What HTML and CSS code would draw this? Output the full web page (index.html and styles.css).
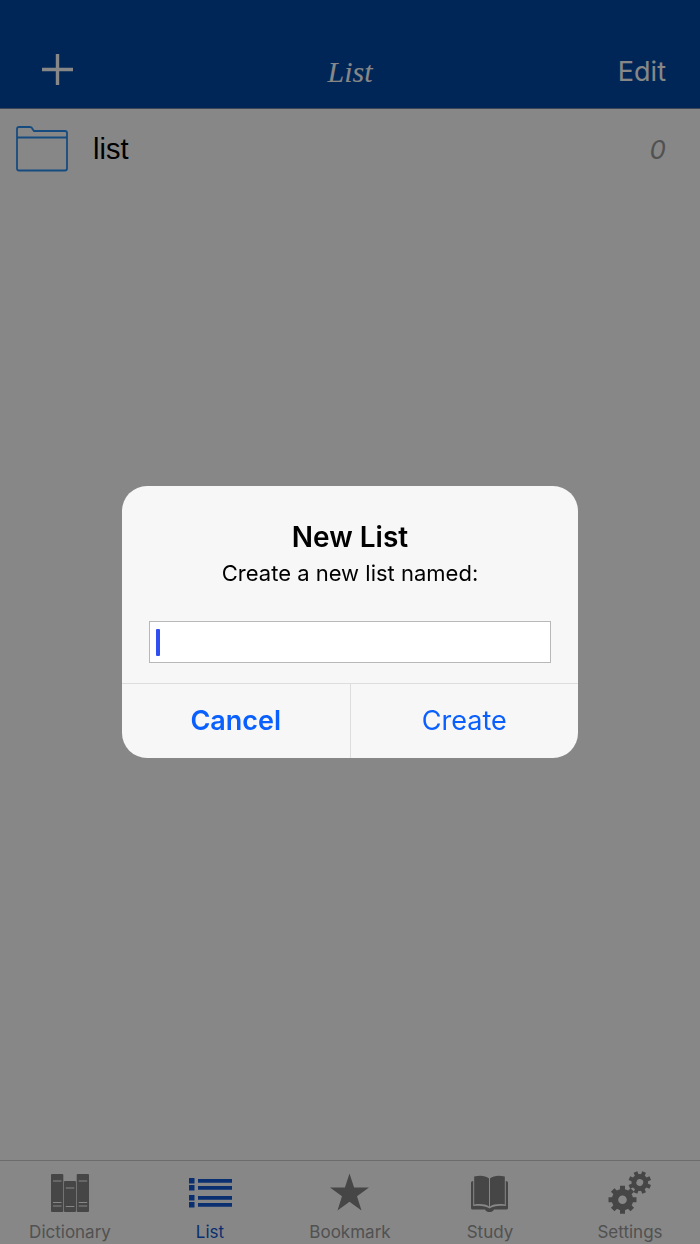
FILE: index.html
```html
<!DOCTYPE html>
<html lang="en">
<head>
    <meta charset="UTF-8">
    <meta name="viewport" content="width=device-width, initial-scale=1.0">
    <title>List</title>
    <link rel="stylesheet" href="styles.css">
</head>
<body>
    <header class="navbar">
        <button class="nav-btn add" type="button" aria-label="Add">
            <svg width="32" height="32" viewBox="0 0 32 32"><path d="M15.500 0v31M0 15.500h31" stroke="currentColor" stroke-width="3.400"/></svg>
        </button>
        <h1 class="nav-title">List</h1>
        <button class="nav-btn edit" type="button">Edit</button>
    </header>

    <main class="content">
        <a class="row" href="#list">
            <svg class="folder" width="52" height="46" viewBox="0 0 52 46" fill="none" stroke="currentColor" stroke-width="1.800">
                <path d="M1 11.500V3q0-2 2-2h11q2 0 2.500 2l1.500 2H49q2 0 2 2v35.500q0 2-2 2H3q-2 0-2-2zM1 11.500h50"/>
            </svg>
            <span class="row-name">list</span>
            <span class="row-count">0</span>
        </a>
    </main>

    <nav class="tabbar">
        <a class="tab" href="#dictionary">
            <svg width="44" height="44" viewBox="0 0 44 44" fill="currentColor">
                <rect x="3" y="3" width="12.300" height="38" rx="1"/>
                <rect x="16" y="10" width="12" height="31" rx="1"/>
                <rect x="28.700" y="3" width="12.300" height="38" rx="1"/>
                <path class="cut" d="M5 10h8.500M5 31.500h8.500M5 35h8.500M17.800 17h8.500M17.800 35.500h8.500M30.700 10h8.500M30.700 31.500h8.500M30.700 35h8.500"/>
            </svg>
            <span>Dictionary</span>
        </a>
        <a class="tab active" href="#list" aria-current="page">
            <svg width="44" height="44" viewBox="0 0 44 44" fill="currentColor">
                <path d="M1 7h5.500v5.500H1zM1 14h5.500v5.500H1zM1 24h5.500v5.500H1zM1 31h5.500v5.500H1zM10 8h34v3.800H10zM10 15h34v3.800H10zM10 25h34v3.800H10zM10 32h34v3.800H10z"/>
            </svg>
            <span>List</span>
        </a>
        <a class="tab" href="#bookmark">
            <svg width="44" height="44" viewBox="0 0 44 44" fill="currentColor">
                <path d="M21.500 2.500l4.600 14H41L29 25.200 33.500 39.500 21.500 30.700 9.500 39.500 14 25.200 2 16.500h14.900z"/>
            </svg>
            <span>Bookmark</span>
        </a>
        <a class="tab" href="#study">
            <svg width="44" height="44" viewBox="0 0 44 44" fill="currentColor">
                <path d="M6.200 5.500C12 4 17.500 4.500 21 7.500V35.500C17.500 33 12 32.500 6.200 33.500zM36.800 5.500C31 4 25.500 4.500 22 7.500V35.500c3.500-2.500 9-3 14.800-2z"/>
                <path d="M5.200 10v25.100c6.500-1 12-.500 16.300 2.400 4.300-2.900 9.800-3.400 16.300-2.400V10q2.200 0 2.200 1.500V37q0 1.500-1.600 1.500H26C25 40.500 23.500 41 21.500 41s-3.500-.500-4.500-2.500H4.600Q3 38.500 3 37V11.500Q3 10 5.200 10z"/>
            </svg>
            <span>Study</span>
        </a>
        <a class="tab" href="#settings">
            <svg width="44" height="44" viewBox="0 0 44 44" fill="none" stroke="currentColor">
                <g transform="translate(14.500 28.700)">
                    <circle r="7.500" stroke-width="6.400"/>
                    <path stroke-width="5" d="M0-9.500V-14M0 9.500V14M-9.500 0H-14M9.500 0H14M-6.700-6.700l-3.100-3.100M6.700-6.700l3.100-3.100M-6.700 6.700l-3.100 3.100M6.700 6.700l3.100 3.100"/>
                </g>
                <g transform="translate(31.800 11.500) rotate(22.500)">
                    <circle r="5.900" stroke-width="5"/>
                    <path stroke-width="4" d="M0-7.500V-11.300M0 7.500V11.300M-7.500 0H-11.300M7.500 0H11.300M-5.300-5.300l-2.700-2.700M5.300-5.300l2.700-2.700M-5.300 5.300l-2.700 2.700M5.300 5.300l2.700 2.700"/>
                </g>
            </svg>
            <span>Settings</span>
        </a>
    </nav>

    <div class="overlay">
        <form class="alert" role="dialog" aria-labelledby="alert-title">
            <div class="alert-body">
                <h2 class="alert-title" id="alert-title">New List</h2>
                <label class="alert-text" for="list-name">Create a new list named:</label>
                <div class="field">
                    <input class="field-input" id="list-name" type="text" autocomplete="off">
                    <span class="caret"></span>
                </div>
            </div>
            <div class="alert-actions">
                <button class="alert-btn cancel" type="button">Cancel</button>
                <button class="alert-btn" type="button">Create</button>
            </div>
        </form>
    </div>
</body>
</html>
```
FILE: styles.css
```css
* {
    box-sizing: border-box;
}

body {
    margin: 0;
    min-height: 100vh;
    display: flex;
    flex-direction: column;
    font-family: Inter, "Liberation Sans", sans-serif;
    background-color: #ffffff;
    color: #000000;
}

button {
    padding: 0;
    border: none;
    background: none;
    font-family: inherit;
    cursor: pointer;
}

a {
    color: inherit;
    text-decoration: none;
}

/* top bar */
.navbar {
    display: grid;
    grid-template-columns: 1fr auto 1fr;
    align-items: center;
    padding: 48px 34px 12px;
    border-bottom: 1px solid #7085a8;
    background-color: #0047a5;
    color: #ffffff;
}

.nav-btn {
    color: inherit;
    font-size: 27px;
    line-height: 48px;
}

.add {
    justify-self: start;
    height: 44px;
    padding-left: 8px;
    align-self: start;
}

.add svg {
    display: block;
}

.edit {
    justify-self: end;
}

.nav-title {
    margin: 0;
    font-family: "Liberation Serif", serif;
    font-size: 30px;
    font-style: italic;
    font-weight: normal;
    line-height: 48px;
}

/* list rows */
.content {
    flex: 1;
}

.row {
    display: flex;
    align-items: center;
    height: 80px;
    padding: 0 34px 0 16px;
}

.folder {
    color: #2b8ff0;
}

.row-name {
    flex: 1;
    margin-left: 25px;
    font-family: "Liberation Sans", sans-serif;
    font-size: 29px;
}

.row-count {
    color: #999999;
    font-size: 26px;
    font-style: italic;
}

/* bottom tabs */
.tabbar {
    display: flex;
    border-top: 1px solid #cccccc;
}

.tab {
    flex: 1;
    display: flex;
    flex-direction: column;
    align-items: center;
    padding-top: 10px;
    color: #848484;
    font-size: 17px;
}

.tab span {
    margin-top: 5px;
    line-height: 24px;
    color: #999999;
}

.tab.active,
.tab.active span {
    color: #145ad6;
}

.cut {
    stroke: #ffffff;
    stroke-width: 1;
}

/* dialog */
.overlay {
    position: fixed;
    inset: 0;
    display: flex;
    align-items: center;
    justify-content: center;
    background-color: rgba(0, 0, 0, 0.47);
}

.alert {
    width: 456px;
    max-width: 90%;
    border-radius: 25px;
    background-color: #f7f7f7;
    overflow: hidden;
}

.alert-body {
    display: flex;
    flex-direction: column;
    padding: 33px 27px 20px;
    text-align: center;
}

.alert-title {
    margin: 0;
    font-size: 28px;
    font-weight: 600;
    line-height: 36px;
}

.alert-text {
    font-size: 22px;
    line-height: 36px;
}

.field {
    position: relative;
    margin-top: 30px;
}

.field-input {
    display: block;
    width: 100%;
    height: 42px;
    padding: 0 8px;
    border: 1px solid #b8b8b8;
    border-radius: 0;
    background-color: #ffffff;
    font: inherit;
    font-size: 24px;
    outline: none;
}

.caret {
    position: absolute;
    top: 8px;
    left: 7px;
    width: 4px;
    height: 27px;
    border-radius: 1px;
    background-color: #304ff0;
}

.alert-actions {
    display: flex;
    border-top: 1px solid #dddddd;
}

.alert-btn {
    flex: 1;
    color: #0a60ff;
    font-size: 27px;
    line-height: 74px;
}

.cancel {
    border-right: 1px solid #dddddd;
    font-weight: 600;
}
```
